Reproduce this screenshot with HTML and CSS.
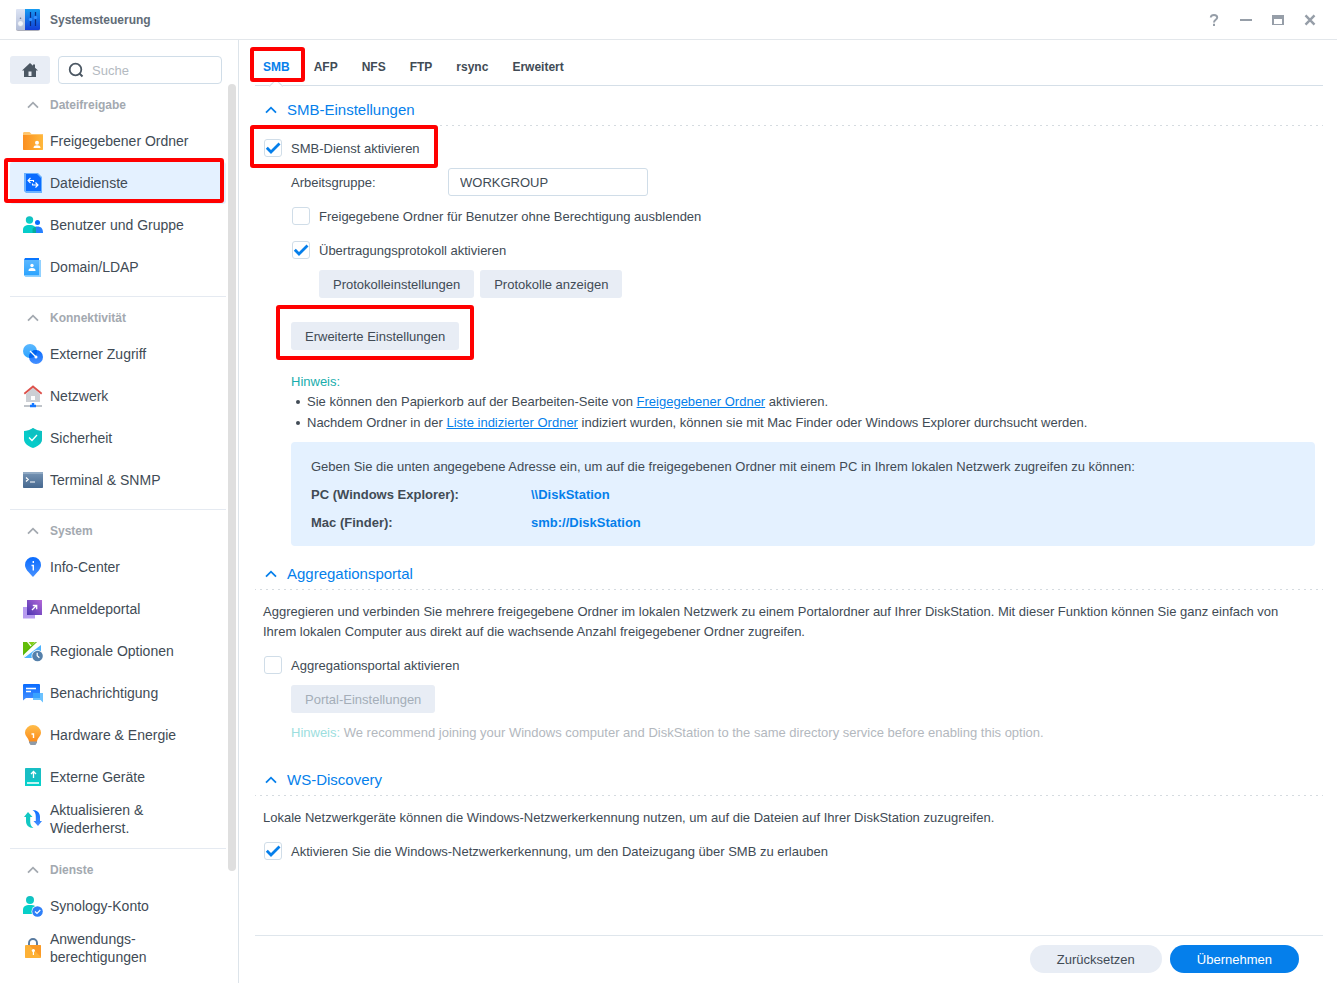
FILE: index.html
```html
<!DOCTYPE html>
<html lang="de">
<head>
    <meta charset="UTF-8">
    <meta name="viewport" content="width=device-width, initial-scale=1.0">
    <title>Systemsteuerung</title>
    <link rel="stylesheet" href="styles.css">
</head>
<body>
    <!-- Gradients and shared symbols -->
    <svg class="defs" width="0" height="0" aria-hidden="true">
        <defs>
            <linearGradient id="g-blue" x1="0" y1="0" x2="0" y2="1"><stop offset="0" stop-color="#0a6cff"/><stop offset="1" stop-color="#4690ff"/></linearGradient>
            <linearGradient id="g-sky" x1="0" y1="0" x2="0" y2="1"><stop offset="0" stop-color="#5cb8ff"/><stop offset="1" stop-color="#2ba4ff"/></linearGradient>
            <linearGradient id="g-teal" x1="0" y1="0" x2="0" y2="1"><stop offset="0" stop-color="#14bcbf"/><stop offset="1" stop-color="#06d4cb"/></linearGradient>
            <linearGradient id="g-orange" x1="0" y1="0" x2="0" y2="1"><stop offset="0" stop-color="#ffbd4a"/><stop offset="1" stop-color="#fb8c1c"/></linearGradient>
            <linearGradient id="g-folder" x1="0" y1="0" x2="1" y2="0"><stop offset="0" stop-color="#fb8f20"/><stop offset="1" stop-color="#ffb83c"/></linearGradient>
            <linearGradient id="g-purple" x1="1" y1="0" x2="0" y2="1"><stop offset="0" stop-color="#b468d8"/><stop offset="1" stop-color="#4a34b0"/></linearGradient>
            <linearGradient id="g-steel" x1="0" y1="0" x2="0" y2="1"><stop offset="0" stop-color="#7795b5"/><stop offset="1" stop-color="#46688f"/></linearGradient>
            <linearGradient id="g-panel" x1="0" y1="0" x2="0" y2="1"><stop offset="0" stop-color="#169cf2"/><stop offset="1" stop-color="#123fd8"/></linearGradient>
            <linearGradient id="g-grey" x1="0" y1="0" x2="0" y2="1"><stop offset="0" stop-color="#dde4f4"/><stop offset="1" stop-color="#b3bed8"/></linearGradient>
        </defs>
        <symbol id="chevron" viewBox="0 0 12 8"><path d="M1 6.7 6 1.7l5 5" fill="none" stroke="currentColor" stroke-width="1.8"/></symbol>
    </svg>

    <header class="titlebar">
        <svg class="app-icon" viewBox="0 0 24 24">
            <path d="M0 18h24v3a2 2 0 0 1-2 2H2a2 2 0 0 1-2-2z" fill="#8c8f9c" opacity=".7"/>
            <path d="M1 1h8v21H1.500A1.500 1.500 0 0 1 0 20.500V2a1 1 0 0 1 1-1z" fill="url(#g-grey)"/>
            <path d="M9 1h14a1 1 0 0 1 1 1v18.500a1.500 1.500 0 0 1-1.500 1.500H9z" fill="url(#g-panel)"/>
            <circle cx="4.500" cy="15.500" r="2.900" fill="#f2f5fb" stroke="#a9b5cf" stroke-width=".5"/>
            <circle cx="4.500" cy="10.300" r=".8" fill="#68758f"/>
            <path d="M14.500 4v14M19.500 4v14" stroke="#0a2a80" stroke-width="1.200"/>
            <circle cx="14.500" cy="11.500" r="1.700" fill="#3390ff"/><circle cx="19.500" cy="9.500" r="1.700" fill="#3390ff"/>
        </svg>
        <h1>Systemsteuerung</h1>
        <div class="window-buttons">
            <button aria-label="Hilfe"><svg viewBox="0 0 16 16"><path d="M4.800 5.500C4.800 3.700 6 3 8 3s3.200.9 3.200 2.500c0 2.300-3.200 2.400-3.200 4.900M8 11.800v2.200" fill="none" stroke="currentColor" stroke-width="2"/></svg></button>
            <button aria-label="Minimieren"><svg viewBox="0 0 16 16"><path d="M2 8h12" stroke="currentColor" stroke-width="2"/></svg></button>
            <button aria-label="Maximieren"><svg viewBox="0 0 16 16"><path d="M2 3h12v10H2zM4 7v5h8V7z" fill="currentColor" fill-rule="evenodd"/></svg></button>
            <button aria-label="Schließen"><svg viewBox="0 0 16 16"><path d="M3.500 3.300l9 9.400M12.500 3.300l-9 9.400" stroke="currentColor" stroke-width="2.400"/></svg></button>
        </div>
    </header>

    <div class="window">
        <aside class="sidebar">
            <div class="search-row">
                <button class="home" aria-label="Startseite"><svg viewBox="0 0 16 14"><path d="M8 0 0 7.500h2V14h12V7.500h2L13 4.700V1.500h-2v1.300zM6.500 8.500h3V13h-3z" fill="#4b5763" fill-rule="evenodd"/></svg></button>
                <div class="search">
                    <svg viewBox="0 0 16 16"><circle cx="7.500" cy="7.500" r="5.800" fill="none" stroke="#4b5763" stroke-width="1.800"/><path d="m11.500 11.500 3 3" stroke="#4b5763" stroke-width="2"/></svg>
                    <input type="text" placeholder="Suche" aria-label="Suche">
                </div>
            </div>
            <div class="nav-wrap">
                <nav>
                    <section>
                        <h2><svg><use href="#chevron"/></svg>Dateifreigabe</h2>
                        <a href="#">
                            <svg viewBox="0 0 20 20"><path d="M0 2.500C0 1.700.5 1 1.300 1h5.200l2 2H20v6H0z" fill="#ffc66e"/><path d="M0 4h19.500l.5.500V18.500l-.5.500H.5L0 18.500z" fill="url(#g-folder)"/><circle cx="14" cy="11.700" r="2" fill="#fff"/><path d="M10.500 17c0-2 1.400-2.700 3.500-2.700s3.500.7 3.500 2.700z" fill="#fff"/></svg>
                            <span>Freigegebener Ordner</span></a>
                        <a href="#" class="active marked">
                            <svg viewBox="0 0 20 20"><path d="M1 0h14l4 4v16H3l-2-2z" fill="#6bb2ff"/><path d="M3 1h11l4 4v13H3z" fill="#0a6cff"/><path d="M7.500 5 5 7.500 7.500 10M5 7.500h5.500V9M12.500 9.500 15 12l-2.500 2.500M15 12H9.500v-1.500" fill="none" stroke="#fff" stroke-width="1.100"/></svg>
                            <span>Dateidienste</span></a>
                        <a href="#">
                            <svg viewBox="0 0 20 20"><circle cx="6.500" cy="5" r="3.700" fill="url(#g-teal)"/><circle cx="14.500" cy="7.500" r="2.500" fill="#0a6cff"/><path d="M10 18v-4.500c1-1.500 2.500-2 4.500-2 3.500 0 5.500 2 5.500 6.500z" fill="#2681ff"/><path d="M0 18v-3c0-3.500 2-5 6.500-5s6.500 1.500 6.500 5v3z" fill="#06ccca"/><path d="M9.500 18v-4c.8-1.300 1.800-2 3-2.200.4.900.5 2 .5 3.200v3z" fill="#05ad9c"/></svg>
                            <span>Benutzer und Gruppe</span></a>
                        <a href="#">
                            <svg viewBox="0 0 20 20"><path d="M3 3h15v17H2.500L1 18.500z" fill="#91d1ff"/><path d="M1 3h15v15.200H1z" fill="url(#g-sky)"/><path d="M2 1h14v2H1z" fill="#0876ff"/><circle cx="9" cy="8.500" r="1.700" fill="#fff"/><path d="M5.500 14c0-2.200 1-3 3.500-3s3.500.8 3.500 3z" fill="#fff"/></svg>
                            <span>Domain/LDAP</span></a>
                    </section>
                    <section>
                        <h2><svg><use href="#chevron"/></svg>Konnektivität</h2>
                        <a href="#">
                            <svg viewBox="0 0 20 20"><circle cx="7" cy="7" r="7" fill="url(#g-sky)"/><circle cx="13" cy="13" r="7" fill="url(#g-blue)"/><path d="M6.100 12A7 7 0 0 1 14 6.100 7 7 0 0 1 6.100 14z" fill="#0064f0"/><path d="m7 7 5.500 5.500" stroke="#fff" stroke-width="1.300"/><circle cx="13" cy="13" r="1.500" fill="#fff"/></svg>
                            <span>Externer Zugriff</span></a>
                        <a href="#">
                            <svg viewBox="0 0 20 20"><path d="M10 1.500 3 8v8h14V8z" fill="#cccfd4"/><path d="m1.300 7.700 8.700-7.200 8.700 7.200" fill="none" stroke="#dd514b" stroke-width="1.800"/><path d="M8 10h4v4H8z" fill="#fff"/><path d="M1 20h18" stroke="#bfc4ca" stroke-width="2"/><path d="M7 20h6M10 17v3" stroke="#1677ff" stroke-width="2.400"/></svg>
                            <span>Netzwerk</span></a>
                        <a href="#">
                            <svg viewBox="0 0 20 20"><path d="M10 0c3 2 6 3 9 3v8c0 4-3 7-9 9-6-2-9-5-9-9V3c3 0 6-1 9-3z" fill="#06cbc9"/><path d="M10 0c3 2 6 3 9 3v8c0 2-.7 3.700-2 5L3 3c2.500-.3 5-1.200 7-3z" fill="#12babc" opacity=".55"/><path d="m6 9.500 3 3L14 7" fill="none" stroke="#fff" stroke-width="1.300"/></svg>
                            <span>Sicherheit</span></a>
                        <a href="#">
                            <svg viewBox="0 0 20 20"><rect y="2" width="20" height="16" rx=".7" fill="url(#g-steel)"/><path d="M.7 2h18.600l.7.700V4H0V2.700z" fill="#91aac4"/><path d="m3 7.500 2.200 2L3 11.500M7 12h5" fill="none" stroke="#fff" stroke-width="1.200"/></svg>
                            <span>Terminal &amp; SNMP</span></a>
                    </section>
                    <section>
                        <h2><svg><use href="#chevron"/></svg>System</h2>
                        <a href="#">
                            <svg viewBox="0 0 20 20"><path d="M10 0a8 8 0 0 1 8 8c0 4-3.500 7-8 12C5.500 15 2 12 2 8a8 8 0 0 1 8-8z" fill="url(#g-blue)"/><path d="M10.300 4v2M8.500 8.500h1.800V13.500" fill="none" stroke="#fff" stroke-width="1.400"/></svg>
                            <span>Info-Center</span></a>
                        <a href="#">
                            <svg viewBox="0 0 20 20"><path d="M0 8h12v11.500H0z" fill="#b79bf0"/><path d="M4 1h15v15H4z" fill="url(#g-purple)"/><path d="m9 11 4.500-4.500M9.800 6.500h3.900v3.800" fill="none" stroke="#fff" stroke-width="1.300"/></svg>
                            <span>Anmeldeportal</span></a>
                        <a href="#">
                            <svg viewBox="0 0 20 20"><path d="M0 1h18v16H0z" fill="#fff"/><path d="M0 1h4l4 5-8 8z" fill="#62bd09"/><path d="M5.500 1H12L8.700 4.800z" fill="#84cf18"/><path d="M13.500 1H18L1 15.500 0 14z" fill="#58b508"/><path d="M13.500 1H18v1.500L0 16.500v-2z" fill="#fff"/><path d="M12.800 1H14L0 14v-2z" fill="#58b508"/><path d="M18 4v13H1z" fill="#4bb3ff"/><circle cx="14.500" cy="15" r="6" fill="#fff"/><circle cx="14.500" cy="15" r="5.300" fill="#5580aa"/><path d="M14.200 11.700v3l2.200 2" fill="none" stroke="#fff" stroke-width="1.200"/></svg>
                            <span>Regionale Optionen</span></a>
                        <a href="#">
                            <svg viewBox="0 0 20 20"><path d="M.7 1h15.600l.7.700V15H3l-3 2.500V1.700z" fill="url(#g-blue)"/><path d="M10 10h10v9.500L17.500 17H10z" fill="#6bc2ff"/><path d="M10 10h7v5h-7z" fill="#38a3ff"/><path d="M3 5.500h10M3 8.500h5" stroke="#fff" stroke-width="1.300"/></svg>
                            <span>Benachrichtigung</span></a>
                        <a href="#">
                            <svg viewBox="0 0 20 20"><path d="M6 16h8v1.500L12.500 20h-5L6 17.500z" fill="#8f9ba8"/><path d="M10 0a8 8 0 0 1 8 7.500c0 4-3.500 5-4 9H6c-.5-4-4-5-4-9A8 8 0 0 1 10 0z" fill="url(#g-orange)"/><path d="M8.500 9H10.500v4" fill="none" stroke="#fff" stroke-width="1.400"/></svg>
                            <span>Hardware &amp; Energie</span></a>
                        <a href="#">
                            <svg viewBox="0 0 20 20"><rect x="2" y="1" width="16" height="18" rx=".7" fill="#18bec4"/><path d="M2 13h16v5.300l-.7.700H2.700l-.7-.7z" fill="#06d0cb"/><path d="M10.500 11V4.500M8 7l2.500-2.500L13 7M4 16h12" fill="none" stroke="#fff" stroke-width="1.300"/></svg>
                            <span>Externe Geräte</span></a>
                        <a href="#">
                            <svg viewBox="0 0 20 20"><path d="M5 3 1 8h2v4c0 4 2.500 7 7.500 7C8 17.500 7.200 15.500 7.200 12V8H9.500z" fill="#12c8c3"/><path d="m15 17 4-5h-2V8c0-4-2.500-7-7.500-7 2.500 1.500 3.300 3.500 3.300 7v4h-2.300z" fill="url(#g-blue)"/></svg>
                            <span>Aktualisieren &amp;<br>Wiederherst.</span></a>
                    </section>
                    <section>
                        <h2><svg><use href="#chevron"/></svg>Dienste</h2>
                        <a href="#">
                            <svg viewBox="0 0 20 20"><circle cx="7" cy="4" r="4" fill="url(#g-teal)"/><path d="M0 18v-4c0-3.500 2-5 7-5s6 1 6.500 4v5z" fill="#06cfc8"/><circle cx="14.500" cy="15.500" r="6" fill="#fff"/><circle cx="14.500" cy="15.500" r="5.300" fill="#2e7ff8"/><path d="m12 15.500 2 2 3.300-3.500" fill="none" stroke="#fff" stroke-width="1.200"/></svg>
                            <span>Synology-Konto</span></a>
                        <a href="#">
                            <svg viewBox="0 0 20 20"><path d="M6 8V5a4 4 0 0 1 8 0v3" fill="none" stroke="#587a9f" stroke-width="1.900"/><path d="M2.500 7h15l.5.500v12l-.5.500h-15l-.5-.5v-12z" fill="#fdb136"/><path d="M6 7h11.500l.5.500V19z" fill="#f99524" opacity=".8"/><circle cx="10.400" cy="12.500" r="1.600" fill="#fff"/><path d="M10.400 12.500V17" stroke="#fff" stroke-width="1.200"/></svg>
                            <span>Anwendungs-<br>berechtigungen</span></a>
                    </section>
                </nav>
                <div class="scrollbar"><div class="thumb"></div></div>
            </div>
        </aside>

        <main>
            <div class="tabs">
                <a href="#" class="active marked">SMB</a>
                <a href="#">AFP</a>
                <a href="#">NFS</a>
                <a href="#">FTP</a>
                <a href="#">rsync</a>
                <a href="#">Erweitert</a>
            </div>

            <div class="content">
                <section class="panel">
                    <h2><svg><use href="#chevron"/></svg>SMB-Einstellungen</h2>
                    <div class="panel-body">
                        <div class="row"><label class="check marked"><input type="checkbox" checked>SMB-Dienst aktivieren</label></div>
                        <div class="row indent">
                            <label class="field-label" for="workgroup">Arbeitsgruppe:</label>
                            <input type="text" class="field" id="workgroup" value="WORKGROUP">
                        </div>
                        <div class="row indent"><label class="check"><input type="checkbox">Freigegebene Ordner für Benutzer ohne Berechtigung ausblenden</label></div>
                        <div class="row indent"><label class="check"><input type="checkbox" checked>Übertragungsprotokoll aktivieren</label></div>
                        <div class="row indent-2">
                            <button class="button">Protokolleinstellungen</button>
                            <button class="button">Protokolle anzeigen</button>
                        </div>
                        <div class="row indent advanced"><button class="button marked">Erweiterte Einstellungen</button></div>
                        <div class="notes indent">
                            <span class="hint">Hinweis:</span>
                            <ul>
                                <li>Sie können den Papierkorb auf der Bearbeiten-Seite von <a href="#">Freigegebener Ordner</a> aktivieren.</li>
                                <li>Nachdem Ordner in der <a href="#">Liste indizierter Ordner</a> indiziert wurden, können sie mit Mac Finder oder Windows Explorer durchsucht werden.</li>
                            </ul>
                        </div>
                        <div class="address-box">
                            <p>Geben Sie die unten angegebene Adresse ein, um auf die freigegebenen Ordner mit einem PC in Ihrem lokalen Netzwerk zugreifen zu können:</p>
                            <dl>
                                <dt>PC (Windows Explorer):</dt><dd>\\DiskStation</dd>
                                <dt>Mac (Finder):</dt><dd>smb://DiskStation</dd>
                            </dl>
                        </div>
                    </div>
                </section>

                <section class="panel">
                    <h2><svg><use href="#chevron"/></svg>Aggregationsportal</h2>
                    <div class="panel-body">
                        <p class="intro">Aggregieren und verbinden Sie mehrere freigegebene Ordner im lokalen Netzwerk zu einem Portalordner auf Ihrer DiskStation. Mit dieser Funktion können Sie ganz einfach von Ihrem lokalen Computer aus direkt auf die wachsende Anzahl freigegebener Ordner zugreifen.</p>
                        <div class="row"><label class="check"><input type="checkbox">Aggregationsportal aktivieren</label></div>
                        <div class="row indent"><button class="button" disabled>Portal-Einstellungen</button></div>
                        <div class="row indent disabled"><p><span class="hint">Hinweis:</span> We recommend joining your Windows computer and DiskStation to the same directory service before enabling this option.</p></div>
                    </div>
                </section>

                <section class="panel">
                    <h2><svg><use href="#chevron"/></svg>WS-Discovery</h2>
                    <div class="panel-body">
                        <p class="intro">Lokale Netzwerkgeräte können die Windows-Netzwerkerkennung nutzen, um auf die Dateien auf Ihrer DiskStation zuzugreifen.</p>
                        <div class="row"><label class="check"><input type="checkbox" checked>Aktivieren Sie die Windows-Netzwerkerkennung, um den Dateizugang über SMB zu erlauben</label></div>
                    </div>
                </section>
            </div>

            <footer>
                <button class="pill">Zurücksetzen</button>
                <button class="pill primary">Übernehmen</button>
            </footer>
        </main>
    </div>
</body>
</html>
```
FILE: styles.css
```css
/* Global Styles */
* {
    box-sizing: border-box;
}

body {
    display: flex;
    flex-direction: column;
    height: 100vh;
    margin: 0;
    overflow: hidden;
    background: #ffffff;
    color: #414b55;
    font-family: "Liberation Sans", Arial, sans-serif;
    font-size: 13px;
    line-height: 21px;
}

h1, h2, p, ul, dl, dd {
    margin: 0;
    padding: 0;
}

button, input {
    font: inherit;
    color: inherit;
}

button {
    border: none;
    cursor: pointer;
}

a {
    color: #057feb;
}

.defs {
    position: absolute;
}

/* Title bar */
.titlebar {
    display: flex;
    align-items: center;
    flex: none;
    height: 40px;
    padding: 0 19px 0 16px;
    border-bottom: 1px solid #e3e7eb;
}

.titlebar h1 {
    margin-left: 10px;
    font-size: 12px;
    line-height: 20px;
    color: #626c77;
}

.app-icon {
    width: 24px;
    height: 24px;
}

.window-buttons {
    display: flex;
    gap: 16px;
    margin-left: auto;
}

.window-buttons button {
    display: flex;
    padding: 0;
    background: none;
    color: #969ea8;
}

.window-buttons svg {
    width: 16px;
    height: 16px;
}

.window {
    display: flex;
    flex: 1;
    min-height: 0;
}

/* Sidebar */
.sidebar {
    display: flex;
    flex-direction: column;
    flex: none;
    width: 239px;
    border-right: 1px solid #dde4ea;
}

.search-row {
    display: flex;
    gap: 8px;
    padding: 16px 16px 0 10px;
}

.home {
    display: flex;
    align-items: center;
    justify-content: center;
    width: 40px;
    height: 28px;
    padding: 0;
    border-radius: 3px;
    background: #e8edf5;
}

.home svg {
    width: 16px;
    height: 14px;
}

.search {
    display: flex;
    align-items: center;
    gap: 8px;
    flex: 1;
    min-width: 0;
    height: 28px;
    padding: 0 9px;
    border: 1px solid #d0dde8;
    border-radius: 4px;
}

.search svg {
    flex: none;
    width: 16px;
    height: 16px;
}

.search input {
    width: 100%;
    min-width: 0;
    padding: 0;
    border: none;
    outline: none;
    background: none;
}

.search input::placeholder {
    color: #b4bac1;
}

.nav-wrap {
    display: flex;
    flex: 1;
    min-height: 0;
}

nav {
    flex: 1;
    overflow: hidden;
    padding: 0 2px 0 10px;
}

nav section {
    padding-bottom: 8px;
    border-bottom: 1px solid #e5eaf1;
}

nav section:last-child {
    border-bottom: none;
}

nav h2 {
    display: flex;
    align-items: center;
    gap: 11px;
    height: 36px;
    padding: 5px 0 0 17px;
    font-size: 12px;
    line-height: 20px;
    color: #a3a9b0;
}

nav h2 svg, .panel h2 svg {
    width: 12px;
    height: 8px;
}

nav a {
    display: flex;
    align-items: center;
    gap: 7px;
    height: 42px;
    padding-left: 13px;
    border-radius: 3px;
    color: #414b55;
    font-size: 14px;
    line-height: 18px;
    text-decoration: none;
}

nav a svg {
    flex: none;
    width: 20px;
    height: 20px;
    overflow: visible;
}

nav a.active {
    background: #e4f1ff;
}

.scrollbar {
    width: 8px;
    margin-right: 2px;
}

.thumb {
    height: 87.5%;
    border-radius: 4px;
    background: #dfdfdf;
}

/* Red highlight frames */
.marked {
    position: relative;
}

.marked::after {
    content: "";
    position: absolute;
    border: 4px solid #ff0000;
    border-radius: 3px;
    pointer-events: none;
}

nav .marked::after {
    inset: -4px 2px 1px -6px;
}

.tabs .marked::after {
    inset: -1px -15px 3px -13px;
}

.check.marked::after {
    inset: -9px -18px -6px -13px;
}

.button.marked::after {
    inset: -17px -15px -10px -15px;
}

/* Main area */
main {
    display: flex;
    flex-direction: column;
    flex: 1;
    min-width: 0;
    padding-right: 14px;
}

.tabs {
    display: flex;
    gap: 24px;
    flex: none;
    height: 46px;
    margin-left: 16px;
    padding: 8px 8px 0;
    border-bottom: 1px solid #d5dfe8;
    line-height: 20px;
}

.tabs a {
    display: flex;
    align-items: center;
    color: #414b55;
    font-size: 12px;
    font-weight: bold;
    text-decoration: none;
}

.tabs a.active {
    color: #057feb;
}

/* Notch in the line under the active tab */
.tabs a.active::before {
    content: "";
    position: absolute;
    bottom: -6px;
    left: 8px;
    width: 9px;
    height: 9px;
    border: 1px solid #d5dfe8;
    border-right: none;
    border-bottom: none;
    background: #ffffff;
    transform: rotate(45deg);
}

.content {
    flex: 1;
    min-height: 0;
    overflow: hidden;
    padding: 8px 0 0 16px;
}

.panel h2 {
    display: flex;
    align-items: center;
    gap: 10px;
    height: 32px;
    padding: 0 10px;
    background: repeating-linear-gradient(to right, #d5dbe0 0 1px, transparent 1px 5px, #d5dbe0 5px 6px) bottom / 100% 1px no-repeat;
    color: #057feb;
    font-size: 15px;
    font-weight: normal;
    line-height: 20px;
}

.panel-body {
    display: flex;
    flex-direction: column;
    gap: 6px;
    padding: 8px 8px 12px;
}

.row {
    display: flex;
    align-items: center;
    gap: 6px;
    min-height: 28px;
}

.indent {
    padding-left: 28px;
}

.indent-2 {
    padding-left: 56px;
}

.check {
    display: flex;
    align-items: center;
    min-height: 28px;
}

.check input {
    appearance: none;
    width: 18px;
    height: 18px;
    margin: 0 9px 0 1px;
    border: 1px solid #d0dde8;
    border-radius: 3px;
    background: #ffffff;
}

.check input:checked {
    background: #ffffff url("data:image/svg+xml,%3Csvg xmlns='http://www.w3.org/2000/svg' viewBox='0 0 16 16'%3E%3Cpath d='M1.800 7.800 6 12l8.500-8.500' fill='none' stroke='%23057feb' stroke-width='2.800'/%3E%3C/svg%3E") center / 16px 16px no-repeat;
}

.field-label {
    width: 151px;
}

.field {
    width: 200px;
    height: 28px;
    padding: 0 11px;
    border: 1px solid #d0dde8;
    border-radius: 3px;
}

.button {
    height: 28px;
    padding: 0 14px;
    border-radius: 3px;
    background: #e8edf5;
}

.button:disabled {
    color: #a4adb8;
    cursor: default;
}

.advanced {
    margin-top: 18px;
}

.notes {
    margin-top: 15px;
}

.hint {
    color: #18adad;
}

.notes ul {
    margin-top: -1px;
    list-style: none;
}

.notes li {
    position: relative;
    padding-left: 16px;
}

.notes li::before {
    content: "";
    position: absolute;
    top: 9px;
    left: 5px;
    width: 4px;
    height: 4px;
    border-radius: 50%;
    background: #414b55;
}

.address-box {
    margin: 3px 0 0 28px;
    padding: 11px 20px 9px;
    border-radius: 4px;
    background: #e4f1ff;
    line-height: 28px;
}

.address-box dl {
    display: grid;
    grid-template-columns: 220px 1fr;
    font-weight: bold;
}

.address-box dd {
    color: #057feb;
}

.intro {
    margin: 4px 0 3px;
    line-height: 20px;
}

.disabled {
    margin-bottom: 5px;
    color: #b3b8be;
    line-height: 20px;
}

.disabled .hint {
    color: #9cdede;
}

/* Footer */
footer {
    display: flex;
    justify-content: flex-end;
    gap: 8px;
    flex: none;
    margin-left: 16px;
    padding: 9px 24px 10px;
    border-top: 1px solid #dfe6ec;
}

.pill {
    height: 28px;
    padding: 0 27px;
    border-radius: 14px;
    background: #e8edf5;
}

.pill.primary {
    background: #057feb;
    color: #ffffff;
}
```
